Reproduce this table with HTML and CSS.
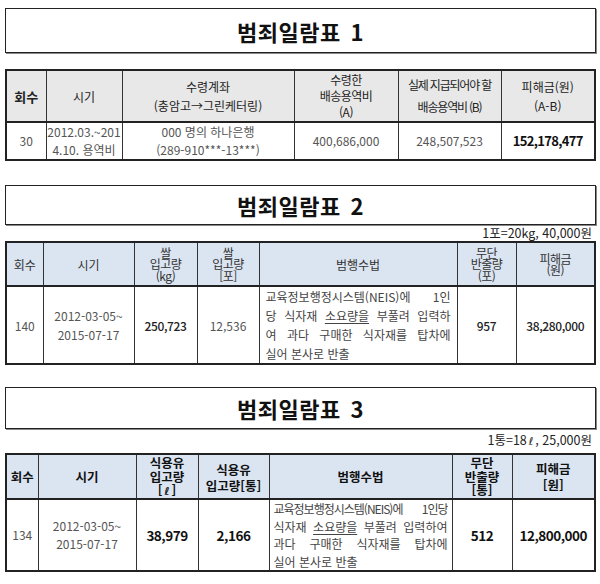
FILE: index.html
```html
<!DOCTYPE html>
<html lang="ko">
<head>
<meta charset="utf-8">
<link rel="stylesheet" href="styles.css">
</head>
<body>
<div class="page">
  <div class="title t1">범죄일람표 1</div>
  <table class="tbl tbl1">
    <colgroup><col style="width:40px"><col style="width:76px"><col style="width:172px"><col style="width:104px"><col style="width:103px"><col></colgroup>
    <tr class="head h1">
      <th class="b">회수</th>
      <th>시기</th>
      <th>수령계좌<br>(충암고→그린케터링)</th>
      <th class="cond">수령한<br>배송용역비<br>(A)</th>
      <th class="cond2">실제 지급되어야 할<br>배송용역비 (B)</th>
      <th>피해금(원)<br>(A-B)</th>
    </tr>
    <tr class="data d1">
      <td>30</td>
      <td>2012.03.~201<br>4.10. 용역비</td>
      <td>000 명의 하나은행<br>(289-910***-13***)</td>
      <td>400,686,000</td>
      <td>248,507,523</td>
      <td class="big">152,178,477</td>
    </tr>
  </table>

  <div class="title t2">범죄일람표 2</div>
  <div class="note">1포=20kg, 40,000원</div>
  <table class="tbl tbl2">
    <colgroup><col style="width:37px"><col style="width:91px"><col style="width:63px"><col style="width:62px"><col style="width:198px"><col style="width:59px"><col></colgroup>
    <tr class="head h2">
      <th>회수</th>
      <th>시기</th>
      <th class="stack">쌀<br>입고량<br>(kg)</th>
      <th class="stack">쌀<br>입고량<br>[포]</th>
      <th>범행수법</th>
      <th class="stack">무단<br>반출량<br>(포)</th>
      <th class="stack">피해금<br>(원)</th>
    </tr>
    <tr class="data d2">
      <td>140</td>
      <td>2012-03-05~<br>2015-07-17</td>
      <td class="semi">250,723</td>
      <td>12,536</td>
      <td class="text"><span class="jl">교육정보행정시스템(NEIS)에 1인</span><span class="jl">당 식자재 <u>소요량을</u> 부풀려 입력하</span><span class="jl">여 과다 구매한 식자재를 탑차에</span><span>실어 본사로 반출</span></td>
      <td class="semi">957</td>
      <td class="semi">38,280,000</td>
    </tr>
  </table>

  <div class="title t3">범죄일람표 3</div>
  <div class="note">1통=18<span class="ell">ℓ</span>, 25,000원</div>
  <table class="tbl tbl3">
    <colgroup><col style="width:32px"><col style="width:98px"><col style="width:62px"><col style="width:71px"><col style="width:183px"><col style="width:60px"><col></colgroup>
    <tr class="head h3">
      <th>회수</th>
      <th>시기</th>
      <th><div class="hcell tight">식용유<br>입고량<br>[<span class="ell">ℓ</span>]</div></th>
      <th><div class="hcell low">식용유<br>입고량[통]</div></th>
      <th>범행수법</th>
      <th><div class="hcell tight">무단<br>반출량<br>[통]</div></th>
      <th>피해금<br>[원]</th>
    </tr>
    <tr class="data d3">
      <td>134</td>
      <td>2012-03-05~<br>2015-07-17</td>
      <td class="big">38,979</td>
      <td class="big">2,166</td>
      <td class="text"><div class="clip"><div class="inner"><span class="jl sq">교육정보행정시스템(NEIS)에 1인당</span><span class="jl">식자재 <u>소요량을</u> 부풀려 입력하여</span><span class="jl">과다 구매한 식자재를 탑차에</span><span>실어 본사로 반출</span></div></div></td>
      <td class="big">512</td>
      <td class="big">12,800,000</td>
    </tr>
  </table>
</div>
</body>
</html>
```
FILE: styles.css
```css
html, body {
  margin: 0;
  padding: 0;
  background: #fff;
}
body {
  font-family: "Noto Sans CJK KR", "Noto Sans", sans-serif;
  color: #333;
}
.page {
  width: 591px;
  padding: 8px 0 0 5px;
}
.title {
  box-sizing: border-box;
  border: 1.5px solid #222;
  box-shadow: 1px 1px 0 #888;
  display: flex;
  align-items: center;
  justify-content: center;
  font-weight: 700;
  font-size: 22px;
  color: #111;
  letter-spacing: 0.5px;
  word-spacing: 3px;
}
.t1 { height: 45px; }
.t2 { height: 40px; margin-top: 24px; }
.t3 { height: 42px; margin-top: 22px; }
.note {
  height: 16px;
  text-align: right;
  font-size: 12.5px;
  line-height: 16px;
  color: #222;
  padding-right: 4px;
}
.t3 + .note { height: 24px; line-height: 22px; }
.ell {
  display: inline-block;
  height: 12px;
  line-height: 12px;
  font-style: italic;
  font-family: "DejaVu Sans", sans-serif;
  font-size: 11px;
  padding: 0 2px;
}
.tbl {
  width: 100%;
  border-collapse: collapse;
  table-layout: fixed;
  border: 2px solid #222;
  margin-top: 0;
}
.tbl1 { margin-top: 16px; }
.tbl th, .tbl td {
  border: 1px solid #333;
  padding: 0;
  text-align: center;
  vertical-align: middle;
  font-size: 12px;
  line-height: 19px;
  overflow: hidden;
}
.head th {
  font-weight: 400;
  color: #222;
}
.h1 th { background: #e8e8e8; height: 50px; }
.h1 th.b { font-weight: 700; font-size: 13px; }
.h1 th.cond { line-height: 16px; letter-spacing: -0.5px; }
.h1 th.cond2 { letter-spacing: -1.2px; line-height: 22px; }
.h1 { border-bottom: 2px solid #222; }
.d1 td { height: 36px; color: #555; line-height: 18px; }
.d1 td.big { color: #111; font-weight: 700; font-size: 13px; letter-spacing: -0.7px; }

.h2 th { background: #dbe5f1; height: 42px; color: #333; }
.h2 th.stack { line-height: 11.5px; font-size: 12px; letter-spacing: -0.5px; }
.h2 { border-bottom: 2px solid #222; }
.d2 td { height: 76px; color: #555; }
.d2 td.semi { color: #222; font-weight: 500; letter-spacing: -0.4px; }

.h3 th { background: #dbe5f1; height: 43px; font-weight: 700; color: #111; font-size: 12.5px; line-height: 16px; }
.hcell.tight { line-height: 13.5px; height: 43px; padding-top: 1px; box-sizing: border-box; }
.hcell.low { padding-top: 6px; height: 36px; }
.h3 { border-bottom: 2px solid #222; }
.d3 td { height: 70px; color: #555; line-height: 18px; }
.d3 td.big { color: #111; font-weight: 700; font-size: 13.5px; letter-spacing: -0.5px; }

.tbl td.text {
  text-align: left;
  padding: 0 6px 0 6px;
  color: #444;
}
.d3 td.text { padding: 0 4px; }
.clip { height: 70px; overflow: hidden; }
.inner { line-height: 17.5px; }
.text span { display: block; white-space: nowrap; }
.text .jl { text-align: justify; text-align-last: justify; white-space: normal; }
.text .sq { letter-spacing: -1px; }
u { text-decoration: underline; text-underline-offset: 2px; }
```
